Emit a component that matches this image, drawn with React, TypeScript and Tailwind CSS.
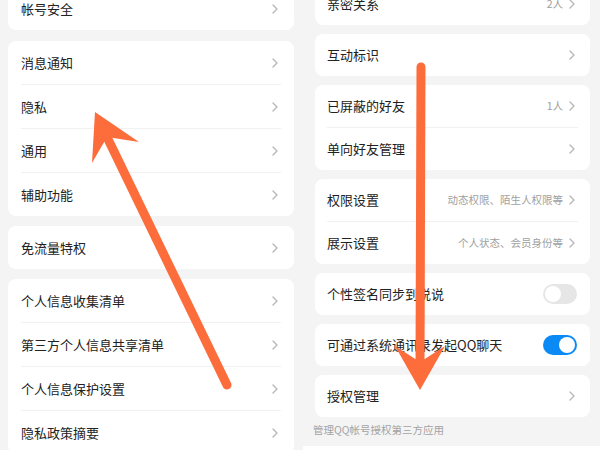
import React from "react";

const Chevron = () => (
  <svg width="6" height="10" viewBox="0 0 6 10" className="shrink-0">
    <polyline points="1,1 5,5 1,9" fill="none" stroke="#b8b8b8" strokeWidth="1.4" strokeLinecap="round" strokeLinejoin="round" />
  </svg>
);

const Toggle = ({ on }: { on: boolean }) => (
  <div className={on ? "w-[34px] h-[20px] rounded-full bg-[#0b8af5] flex items-center justify-end px-[2px]" : "w-[34px] h-[20px] rounded-full bg-[#e6e6e6] flex items-center justify-start px-[2px]"}>
    <div className="w-[16px] h-[16px] rounded-full bg-white" />
  </div>
);

type Row = { label: string; value?: string; toggle?: boolean | null };

const LeftCard = ({ rows, className = "" }: { rows: string[]; className?: string }) => (
  <div className={"bg-white rounded-[8px] " + className}>
    {rows.map((r, i) => (
      <React.Fragment key={r}>
        {i > 0 && <div className="h-px mx-[13px] bg-[#f1f1f1]" />}
        <div className="h-[43px] flex items-center justify-between pl-[13px] pr-[16px]">
          <span className="text-[13px] text-[#222]">{r}</span>
          <Chevron />
        </div>
      </React.Fragment>
    ))}
  </div>
);

const RightCard = ({ rows, className = "" }: { rows: Row[]; className?: string }) => (
  <div className={"bg-white rounded-[8px] " + className}>
    {rows.map((r, i) => (
      <React.Fragment key={r.label}>
        {i > 0 && <div className="h-px mx-[12px] bg-[#f1f1f1]" />}
        <div className={"h-[42px] flex items-center justify-between pl-[12px] " + (r.toggle === undefined ? "pr-[15px]" : "pr-[13px]")}>
          <span className="text-[13px] text-[#222]">{r.label}</span>
          {r.toggle === undefined ? (
            <div className="flex items-center gap-[6px]">
              {r.value && <span className="text-[10.5px] text-[#a0a0a0]">{r.value}</span>}
              <Chevron />
            </div>
          ) : (
            <Toggle on={!!r.toggle} />
          )}
        </div>
      </React.Fragment>
    ))}
  </div>
);

export default function App() {
  return (
    <div
      className="relative w-[600px] h-[450px] overflow-hidden bg-[#f4f4f4] flex items-start"
      style={{ fontFamily: '"Noto Sans CJK SC", "Noto Sans", sans-serif' }}
    >
      <div className="ml-[8px] w-[286px] flex flex-col">
        <LeftCard rows={["帐号安全"]} className="-mt-[13px]" />
        <LeftCard rows={["消息通知", "隐私", "通用", "辅助功能"]} className="mt-[11px]" />
        <LeftCard rows={["免流量特权"]} className="mt-[10px]" />
        <LeftCard rows={["个人信息收集清单", "第三方个人信息共享清单", "个人信息保护设置", "隐私政策摘要"]} className="mt-[10px]" />
      </div>
      <div className="ml-[21px] w-[275px] flex flex-col">
        <RightCard rows={[{ label: "亲密关系", value: "2人" }]} className="-mt-[17px]" />
        <RightCard rows={[{ label: "互动标识" }]} className="mt-[9px]" />
        <RightCard rows={[{ label: "已屏蔽的好友", value: "1人" }, { label: "单向好友管理" }]} className="mt-[9px]" />
        <RightCard
          rows={[
            { label: "权限设置", value: "动态权限、陌生人权限等" },
            { label: "展示设置", value: "个人状态、会员身份等" },
          ]}
          className="mt-[9px]"
        />
        <RightCard rows={[{ label: "个性签名同步到说说", toggle: false }]} className="mt-[9px]" />
        <RightCard rows={[{ label: "可通过系统通讯录发起QQ聊天", toggle: true }]} className="mt-[9px]" />
        <RightCard rows={[{ label: "授权管理" }]} className="mt-[9px]" />
        <div className="h-[29px] pt-[6px] -ml-[2px] text-[10.5px] leading-[14px] text-[#a3a3a3]">管理QQ帐号授权第三方应用</div>
        <div className="-ml-[12px] w-[297px] h-[20px] bg-white" />
      </div>

      <svg className="absolute inset-0 pointer-events-none" width="600" height="450" viewBox="0 0 600 450">
        <line x1="227" y1="385" x2="106" y2="135" stroke="#fd6c3b" strokeWidth="9" strokeLinecap="round" />
        <polygon points="95,112 139,142 107,137 92,163" fill="#fd6c3b" />
        <line x1="421" y1="67" x2="420" y2="366" stroke="#fd6c3b" strokeWidth="9" strokeLinecap="round" />
        <polygon points="420,390 395,346 420,362 445,346" fill="#fd6c3b" />
      </svg>
    </div>
  );
}
